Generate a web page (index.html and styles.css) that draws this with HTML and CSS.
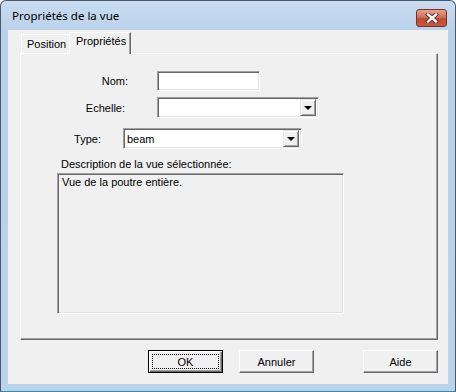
FILE: index.html
```html
<!DOCTYPE html>
<html lang="fr">
<head>
  <meta charset="UTF-8" />
  <title>Propriétés de la vue</title>
  <link rel="stylesheet" href="styles.css">
</head>
<body>
  <div class="window">
    <div class="titlebar">
      <span class="title">Propriétés de la vue</span>
      <div class="close">
        <svg width="14" height="10" viewBox="0 0 14 10">
          <path d="M3 1.5 L11 8.5 M11 1.5 L3 8.5" stroke="#5a2a20" stroke-width="4.2" stroke-linecap="square" fill="none"/>
          <path d="M3 1.5 L11 8.5 M11 1.5 L3 8.5" stroke="#fff" stroke-width="2.4" stroke-linecap="square" fill="none"/>
        </svg>
      </div>
    </div>

    <div class="client">
      <div class="tabs">
        <div class="tab">Position</div>
        <div class="tab active">Propriétés</div>
      </div>

      <div class="panel">
        <div class="row row-nom">
          <span class="label">Nom:</span>
          <div class="field nom-field"></div>
        </div>
        <div class="row row-echelle">
          <span class="label">Echelle:</span>
          <div class="field combo echelle-combo">
            <span class="value"></span>
            <span class="arrow"></span>
          </div>
        </div>
        <div class="row row-type">
          <span class="label">Type:</span>
          <div class="field combo type-combo">
            <span class="value">beam</span>
            <span class="arrow"></span>
          </div>
        </div>

        <div class="desc-label">Description de la vue sélectionnée:</div>
        <div class="desc">Vue de la poutre entière.</div>
      </div>

      <div class="buttons">
        <div class="btn default"><span class="focus">OK</span></div>
        <div class="btn">Annuler</div>
        <div class="btn aide">Aide</div>
      </div>
    </div>
  </div>
</body>
</html>
```

FILE: styles.css
```css
body {
  margin: 0;
  background: #fff;
  font-family: "Liberation Sans", Arial, sans-serif;
  font-size: 11px;
  color: #000;
}

.window {
  width: 456px;
  height: 392px;
  box-sizing: border-box;
  border: 1px solid #4a5868;
  border-bottom-color: #2f8fa8;
  border-radius: 6px 6px 0 0;
  background: linear-gradient(#c9dcf0, #b9d1ea 30px, #bad2ea);
  padding: 0 7px 7px 7px;
  display: flex;
  flex-direction: column;
}

.titlebar {
  height: 29px;
  display: flex;
  align-items: flex-start;
  justify-content: space-between;
}

.title {
  font-family: "Noto Sans", sans-serif;
  font-size: 11.5px;
  margin: 7px 0 0 4px;
  color: #000;
}

.close {
  width: 29px;
  height: 16px;
  margin-top: 8px;
  margin-right: 1px;
  border: 1px solid #7a3426;
  border-radius: 3px;
  background: linear-gradient(#e6a290, #d1705a 45%, #c04a30 55%, #c45a3e);
  display: flex;
  align-items: center;
  justify-content: center;
}

.client {
  flex: 1;
  background: #f0f0f0;
  padding: 2px 10px 0 12px;
  display: flex;
  flex-direction: column;
}

.tabs {
  display: flex;
  align-items: flex-end;
  height: 21px;
  margin-left: 1px;
}

.tab {
  box-sizing: border-box;
  width: 48px;
  height: 19px;
  border-top: 1px solid #fff;
  border-left: 1px solid #fff;
  padding: 3px 0 0 5px;
}

.tab.active {
  position: relative;
  z-index: 1;
  width: 62px;
  height: 22px;
  margin-bottom: -1px;
  background: #f0f0f0;
  border-right: 1px solid #696969;
  box-shadow: inset -1px 0 #a0a0a0;
  padding: 2px 0 0 6px;
}

.panel {
  box-sizing: border-box;
  width: 418px;
  height: 287px;
  border-top: 1px solid #fff;
  border-left: 1px solid #fff;
  border-right: 1px solid #696969;
  border-bottom: 1px solid #696969;
  box-shadow: inset -1px -1px #a0a0a0;
  display: flex;
  flex-direction: column;
}

.row {
  display: flex;
  align-items: center;
}

.label {
  text-align: right;
}

.row-nom { margin-top: 17px; }
.row-nom .label { width: 107px; margin-right: 29px; }

.row-echelle { margin-top: 6px; }
.row-echelle .label { width: 104px; margin-right: 32px; }

.row-type { margin-top: 10px; }
.row-type .label { width: 80px; margin-right: 22px; }

.field {
  box-sizing: border-box;
  background: #fff;
  border-top: 1px solid #a0a0a0;
  border-left: 1px solid #a0a0a0;
  border-right: 1px solid #fff;
  border-bottom: 1px solid #fff;
  box-shadow: inset 1px 1px #696969, inset -1px -1px #e3e3e3;
}

.nom-field {
  width: 103px;
  height: 20px;
}

.combo {
  height: 21px;
  display: flex;
  align-items: center;
  justify-content: space-between;
  padding: 2px;
}

.echelle-combo { width: 162px; }
.type-combo { width: 179px; }

.value {
  padding-left: 1px;
}

.arrow {
  box-sizing: border-box;
  width: 16px;
  height: 17px;
  background: #f0f0f0;
  border-top: 1px solid #e3e3e3;
  border-left: 1px solid #e3e3e3;
  border-right: 1px solid #696969;
  border-bottom: 1px solid #696969;
  box-shadow: inset 1px 1px #fff, inset -1px -1px #a0a0a0;
  display: flex;
  align-items: center;
  justify-content: center;
}

.arrow::after {
  content: "";
  border-left: 4px solid transparent;
  border-right: 4px solid transparent;
  border-top: 4px solid #000;
  margin-top: 1px;
}

.desc-label {
  margin: 9px 0 0 40px;
}

.desc {
  box-sizing: border-box;
  width: 287px;
  height: 141px;
  margin: 3px 0 0 36px;
  padding: 2px 4px;
  background: #f0f0f0;
  border-top: 1px solid #a0a0a0;
  border-left: 1px solid #a0a0a0;
  border-right: 1px solid #fff;
  border-bottom: 1px solid #fff;
  box-shadow: inset 1px 1px #696969, inset -1px -1px #e3e3e3;
}

.buttons {
  display: flex;
  margin-top: 10px;
  padding-left: 128px;
}

.btn {
  box-sizing: border-box;
  width: 75px;
  height: 23px;
  background: #f0f0f0;
  border-top: 1px solid #fff;
  border-left: 1px solid #fff;
  border-right: 1px solid #696969;
  border-bottom: 1px solid #696969;
  box-shadow: inset -1px -1px #a0a0a0;
  display: flex;
  align-items: center;
  justify-content: center;
  margin-right: 16px;
}

.btn.default {
  border: 1px solid #000;
  box-shadow: inset 1px 1px #fff, inset -1px -1px #696969, inset -2px -2px #a0a0a0;
  padding: 3px;
}

.focus {
  flex: 1;
  align-self: stretch;
  border: 1px dotted #000;
  display: flex;
  align-items: center;
  justify-content: center;
}

.btn.aide {
  margin-left: 33px;
  margin-right: 0;
}
```
